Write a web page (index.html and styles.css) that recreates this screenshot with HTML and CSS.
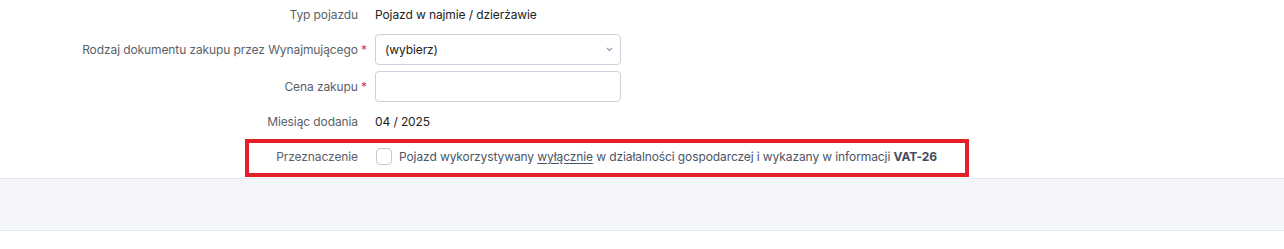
FILE: index.html
```html
<!DOCTYPE html>
<html lang="pl">
<head>
  <meta charset="UTF-8">
  <meta name="viewport" content="width=device-width, initial-scale=1.0">
  <title>Pojazd</title>
  <link rel="stylesheet" href="styles.css">
</head>
<body>

  <div class="form">
    <div class="row row-top">
      <div class="label">Typ pojazdu</div>
      <div class="value">Pojazd w najmie / dzierżawie</div>
    </div>

    <div class="row row-field">
      <div class="label">Rodzaj dokumentu zakupu przez Wynajmującego <span class="req">*</span></div>
      <div class="select">
        <span>(wybierz)</span>
        <svg class="chevron" width="7" height="5" viewBox="0 0 7 5"><path d="M1 1 L3.5 3.5 L6 1" fill="none" stroke="#8a93a0" stroke-width="1.1"/></svg>
      </div>
    </div>

    <div class="row row-field">
      <div class="label">Cena zakupu <span class="req">*</span></div>
      <div class="input"></div>
    </div>

    <div class="row row-month">
      <div class="label">Miesiąc dodania</div>
      <div class="value">04 / 2025</div>
    </div>

    <div class="row row-purpose">
      <div class="label">Przeznaczenie</div>
      <label class="check">
        <span class="box"></span>
        <span>Pojazd wykorzystywany <u>wyłącznie</u> w działalności gospodarczej i wykazany w informacji <b>VAT-26</b></span>
      </label>
      <!-- highlight frame drawn over the row -->
      <div class="highlight"></div>
    </div>
  </div>

  <div class="footer-band"></div>

</body>
</html>
```

FILE: styles.css
```css
body {
  margin: 0;
  font-family: Inter, "Noto Sans", sans-serif;
  font-size: 12px;
  letter-spacing: -0.1px;
  color: #222;
  background-color: #fff;
}
.form {
  display: flex;
  flex-direction: column;
  gap: 6px;
  padding-bottom: 6px;
}
.row {
  display: grid;
  grid-template-columns: 358px 1fr;
  column-gap: 17px;
  align-items: center;
}
.row-top {
  height: 28px;
}
.row-field {
  height: 31px;
}
.row-month {
  height: 26px;
}
.row-purpose {
  height: 32px;
  position: relative;
}
.label {
  text-align: right;
  color: #5b6169;
}
.req {
  color: #d9363e;
  margin-right: -9px;
}
.value {
  color: #222;
}
.select,
.input {
  box-sizing: border-box;
  width: 246px;
  height: 31px;
  border: 1px solid #cbd2dc;
  border-radius: 4px;
  background-color: #fff;
}
.select {
  display: flex;
  align-items: center;
  justify-content: space-between;
  padding: 0 7px 0 9px;
  color: #222;
}
.chevron {
  display: block;
}
.check {
  display: flex;
  align-items: center;
  gap: 7px;
  white-space: nowrap;
  color: #4b5566;
  margin-left: 1px;
}
.check u {
  text-underline-offset: 2px;
}
.check b {
  color: #414c5e;
  font-weight: 700;
}
.box {
  flex: none;
  box-sizing: border-box;
  width: 16px;
  height: 17px;
  border: 1px solid #c3cad5;
  border-radius: 4px;
  background-color: #fff;
}
.highlight {
  position: absolute;
  left: 245px;
  top: -1px;
  width: 724px;
  height: 38px;
  box-sizing: border-box;
  border: 4px solid #e3202a;
  pointer-events: none;
}
.footer-band {
  height: 51px;
  background-color: #f4f6f9;
  border-top: 1px solid #e3e7ee;
  border-bottom: 1px solid #e3e7ee;
}
```
